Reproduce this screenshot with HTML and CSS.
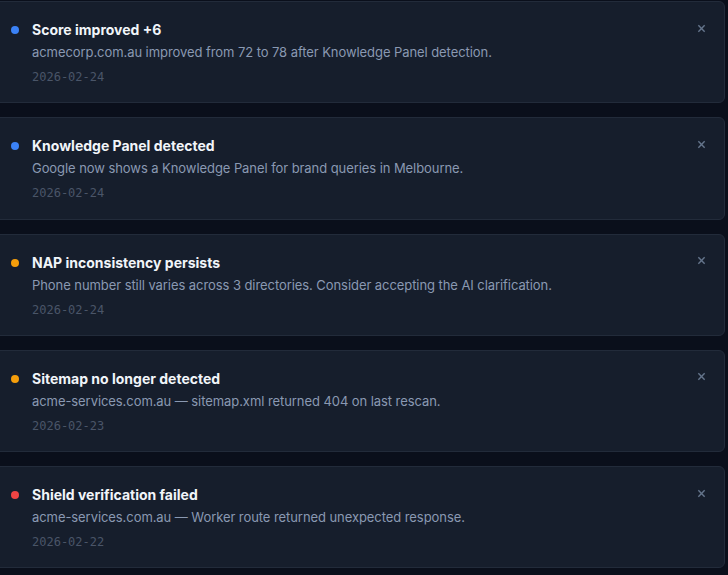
FILE: index.html
```html
<!DOCTYPE html>
<html lang="en">
<head>
  <meta charset="UTF-8" />
  <title>Notifications</title>
  <link rel="stylesheet" href="styles.css">
</head>
<body>

  <!-- Notification list -->
  <div class="alerts">

    <div class="alert">
      <span class="dot blue"></span>
      <div class="alert-body">
        <h3>Score improved +6</h3>
        <p>acmecorp.com.au improved from 72 to 78 after Knowledge Panel detection.</p>
        <time>2026-02-24</time>
      </div>
      <button class="close" aria-label="Dismiss">
        <svg viewBox="0 0 10 10" width="10" height="10"><path d="M1.5 1.5l7 7M8.5 1.5l-7 7"/></svg>
      </button>
    </div>

    <div class="alert">
      <span class="dot blue"></span>
      <div class="alert-body">
        <h3>Knowledge Panel detected</h3>
        <p>Google now shows a Knowledge Panel for brand queries in Melbourne.</p>
        <time>2026-02-24</time>
      </div>
      <button class="close" aria-label="Dismiss">
        <svg viewBox="0 0 10 10" width="10" height="10"><path d="M1.5 1.5l7 7M8.5 1.5l-7 7"/></svg>
      </button>
    </div>

    <div class="alert">
      <span class="dot amber"></span>
      <div class="alert-body">
        <h3>NAP inconsistency persists</h3>
        <p>Phone number still varies across 3 directories. Consider accepting the AI clarification.</p>
        <time>2026-02-24</time>
      </div>
      <button class="close" aria-label="Dismiss">
        <svg viewBox="0 0 10 10" width="10" height="10"><path d="M1.5 1.5l7 7M8.5 1.5l-7 7"/></svg>
      </button>
    </div>

    <div class="alert">
      <span class="dot amber"></span>
      <div class="alert-body">
        <h3>Sitemap no longer detected</h3>
        <p>acme-services.com.au — sitemap.xml returned 404 on last rescan.</p>
        <time>2026-02-23</time>
      </div>
      <button class="close" aria-label="Dismiss">
        <svg viewBox="0 0 10 10" width="10" height="10"><path d="M1.5 1.5l7 7M8.5 1.5l-7 7"/></svg>
      </button>
    </div>

    <div class="alert">
      <span class="dot red"></span>
      <div class="alert-body">
        <h3>Shield verification failed</h3>
        <p>acme-services.com.au — Worker route returned unexpected response.</p>
        <time>2026-02-22</time>
      </div>
      <button class="close" aria-label="Dismiss">
        <svg viewBox="0 0 10 10" width="10" height="10"><path d="M1.5 1.5l7 7M8.5 1.5l-7 7"/></svg>
      </button>
    </div>

  </div>

</body>
</html>
```

FILE: styles.css
```css
* {
  box-sizing: border-box;
  margin: 0;
  padding: 0;
}

body {
  font-family: Inter, "Noto Sans", sans-serif;
  background: #0a0f1b;
  overflow: hidden;
}

/* List of alert cards */
.alerts {
  display: flex;
  flex-direction: column;
  gap: 14px;
  padding-top: 1px;
  margin-left: -8px;
  margin-right: 3px;
}

.alert {
  display: flex;
  align-items: flex-start;
  background: #161e2c;
  border: 1px solid #222b3a;
  border-radius: 6px;
  padding: 18px 13px 16px 18px;
}

.dot {
  width: 8px;
  height: 8px;
  border-radius: 50%;
  margin-top: 6px;
  margin-right: 14px;
  flex-shrink: 0;
}

.dot.blue { background: #3b82f6; }
.dot.amber { background: #f59e0b; }
.dot.red { background: #ef4444; }

.alert-body {
  flex: 1;
  margin-left: -1px;
}

.alert-body h3 {
  font-size: 14px;
  font-weight: 700;
  line-height: 20px;
  color: #f1f5f9;
}

.alert-body p {
  margin-top: 2px;
  font-size: 13px;
  line-height: 20px;
  letter-spacing: -0.07px;
  color: #8a99b2;
}

.alert-body time {
  display: block;
  margin-top: 7px;
  font-family: "DejaVu Sans Mono", monospace;
  font-size: 12px;
  line-height: 17.25px;
  color: #4a5568;
}

.close {
  background: transparent;
  border: none;
  width: 20px;
  height: 20px;
  margin-top: -2px;
  display: flex;
  align-items: center;
  justify-content: center;
  cursor: pointer;
}

.close svg {
  width: 9px;
  height: 9px;
  stroke: #64748b;
  stroke-width: 1.6;
  fill: none;
}
```
